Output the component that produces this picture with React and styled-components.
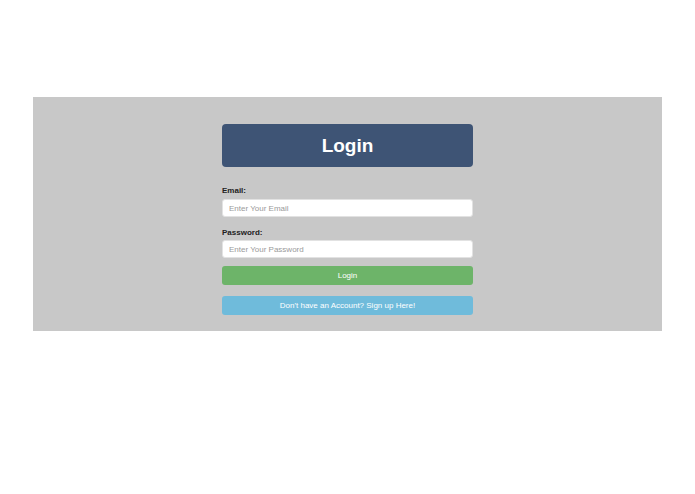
import React, { useState } from "react";
import styled, { createGlobalStyle } from "styled-components";

const GlobalStyle = createGlobalStyle`
  body {
    margin: 0;
    background-color: #ffffff;
    font-family: "Liberation Sans", Arial, sans-serif;
  }
`;

const Page = styled.div`
  padding: 97px 0 0 33px;
`;

const Panel = styled.div`
  width: 629px;
  background-color: #c8c8c8;
  padding: 27px 0 16px;
  display: flex;
  justify-content: center;
`;

const Form = styled.form`
  width: 251px;
  display: flex;
  flex-direction: column;
`;

const Title = styled.h1`
  margin: 0 0 19px;
  height: 43px;
  border-radius: 4px;
  background-color: #3e5475;
  color: #ffffff;
  font-size: 19px;
  font-weight: bold;
  display: flex;
  justify-content: center;
  align-items: center;
`;

const Field = styled.div`
  display: flex;
  flex-direction: column;
  gap: ${(props) => props.gap}px;
  margin-bottom: ${(props) => props.spacing}px;
`;

const Label = styled.label`
  font-size: 8px;
  line-height: 10px;
  font-weight: bold;
  color: #222222;
`;

const Input = styled.input`
  box-sizing: border-box;
  height: 18px;
  margin: 0;
  padding: 0 6px;
  border: 1px solid #e2e2e2;
  border-radius: 3px;
  background-color: #ffffff;
  font-family: inherit;
  font-size: 8px;
  color: #333333;
  outline: none;

  &::placeholder {
    color: #9a9a9a;
  }
`;

const Button = styled.button`
  box-sizing: border-box;
  height: 19px;
  margin: 0 0 ${(props) => props.spacing || 0}px;
  padding: 0;
  border: none;
  border-radius: 3px;
  background-color: ${(props) => props.color};
  color: #ffffff;
  font-family: inherit;
  font-size: 8px;
  cursor: pointer;
`;

const App = () => {
  const [email, setEmail] = useState("");
  const [password, setPassword] = useState("");

  const onSubmit = (e) => {
    e.preventDefault();
  };

  return (
    <>
      <GlobalStyle />
      <Page>
        <Panel>
          <Form onSubmit={onSubmit}>
            <Title>Login</Title>
            <Field gap={3} spacing={11}>
              <Label htmlFor="email">Email:</Label>
              <Input
                id="email"
                type="email"
                placeholder="Enter Your Email"
                value={email}
                onChange={(e) => setEmail(e.target.value)}
              />
            </Field>
            <Field gap={2} spacing={8}>
              <Label htmlFor="password">Password:</Label>
              <Input
                id="password"
                type="password"
                placeholder="Enter Your Password"
                value={password}
                onChange={(e) => setPassword(e.target.value)}
              />
            </Field>
            <Button type="submit" color="#6db469" spacing={11}>
              Login
            </Button>
            <Button type="button" color="#6fbbdb">
              Don't have an Account? Sign up Here!
            </Button>
          </Form>
        </Panel>
      </Page>
    </>
  );
};

export default App;
